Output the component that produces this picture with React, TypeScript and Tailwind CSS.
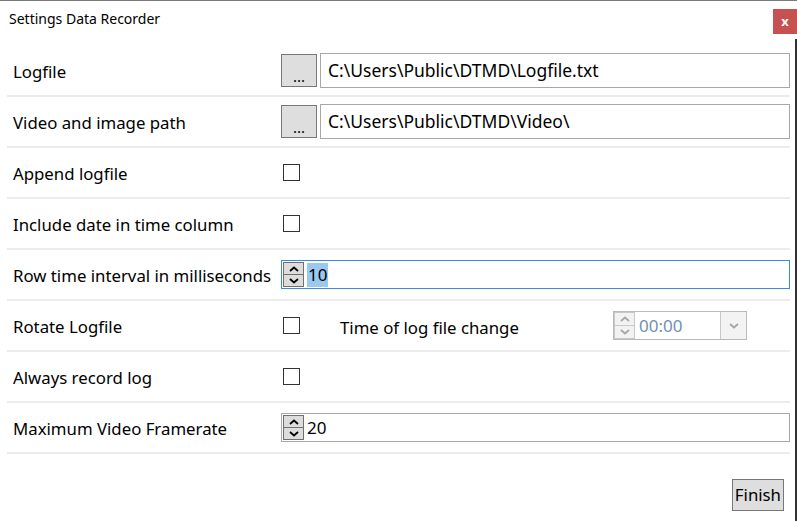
import React from 'react';

const font = { fontFamily: '"Noto Sans", "Open Sans", sans-serif' };

const Check: React.FC = () => (
  <div className="w-[17px] h-[17px] border border-[#333333] bg-white" />
);

const Arrow: React.FC<{ up?: boolean; color?: string }> = ({ up, color = '#000' }) => (
  <svg width="10" height="6" viewBox="0 0 10 6">
    <path
      d={up ? 'M1 5 L5 1.5 L9 5' : 'M1 1 L5 4.5 L9 1'}
      fill="none"
      stroke={color}
      strokeWidth="1.8"
    />
  </svg>
);

const Spin: React.FC<{ disabled?: boolean }> = ({ disabled }) => {
  const c = disabled ? '#a8a8a8' : '#000';
  const bg = disabled ? 'bg-[#f2f2f2]' : 'bg-[#dddddd]';
  const bd = disabled ? 'border-[#c8c8c8]' : 'border-[#707070]';
  return (
    <div className="flex flex-col w-[21px] h-full">
      <div className={`flex-1 flex items-center justify-center border ${bd} ${bg}`}>
        <Arrow up color={c} />
      </div>
      <div className={`flex-1 flex items-center justify-center border border-t-0 ${bd} ${bg}`}>
        <Arrow color={c} />
      </div>
    </div>
  );
};

const Row: React.FC<{ label: string; children?: React.ReactNode }> = ({ label, children }) => (
  <div className="h-[51px] flex items-center border-b-2 border-[#ececec]">
    <div className="w-[274px] pl-[6px] pt-[3px] text-[16.8px] text-black leading-none">{label}</div>
    <div className="flex-1 flex items-center h-full">{children}</div>
  </div>
);

const PathField: React.FC<{ value: string }> = ({ value }) => (
  <div className="flex items-center w-full h-[35px]">
    <button className="w-[36px] h-[33px] bg-[#dedede] border border-[#777777] text-[15px] leading-none pb-[2px] flex items-end justify-center text-black">
      ...
    </button>
    <div className="ml-[3px] flex-1 h-[35px] border border-[#a8a8a8] flex items-center pl-[7px] text-[17.5px] text-black">
      {value}
    </div>
  </div>
);

export default function App() {
  return (
    <div className="w-[797px] h-[521px] bg-white border-t border-[#7a7a7a] overflow-hidden" style={font}>
      <div className="h-[38px] flex items-start justify-between pl-[9px]">
        <div className="mt-[11px] text-[14px] text-black leading-none">Settings Data Recorder</div>
        <button className="mt-[8px] w-[24px] h-[25px] bg-[#c75050] text-white text-[13px] font-bold leading-none flex items-center justify-center">
          x
        </button>
      </div>
      <div className="h-[482px] border-r-2 border-[#333333] pt-[7px]">
        <div className="ml-[7px] w-[783px]">
          <Row label="Logfile">
            <PathField value="C:\Users\Public\DTMD\Logfile.txt" />
          </Row>
          <Row label="Video and image path">
            <PathField value="C:\Users\Public\DTMD\Video\" />
          </Row>
          <Row label="Append logfile">
            <div className="ml-[2px]"><Check /></div>
          </Row>
          <Row label="Include date in time column">
            <div className="ml-[2px]"><Check /></div>
          </Row>
          <Row label="Row time interval in milliseconds">
            <div className="w-full h-[29px] border border-[#3c8ad8] flex items-center pl-[1px]">
              <div className="h-[25px]"><Spin /></div>
              <span className="ml-[3px] bg-[#99c9ef] text-[17px] leading-[24px] px-[1px] text-black">10</span>
            </div>
          </Row>
          <Row label="Rotate Logfile">
            <div className="ml-[2px]"><Check /></div>
            <div className="ml-[40px] w-[273px] text-[16.8px] text-black mt-[4px]">Time of log file change</div>
            <div className="flex h-[29px] w-[134px] border border-[#b9b9b9]">
              <div className="h-full"><Spin disabled /></div>
              <div className="flex-1 flex items-center pl-[4px] text-[17px] text-[#6f8fb5]">00:00</div>
              <div className="w-[26px] h-full bg-[#f3f3f3] border-l border-[#c8c8c8] flex items-center justify-center">
                <Arrow color="#a5a5a5" />
              </div>
            </div>
          </Row>
          <Row label="Always record log">
            <div className="ml-[2px]"><Check /></div>
          </Row>
          <Row label="Maximum Video Framerate">
            <div className="w-full h-[29px] border border-[#a8a8a8] flex items-center pl-[1px]">
              <div className="h-[25px]"><Spin /></div>
              <span className="ml-[3px] text-[17px] leading-[24px] text-black">20</span>
            </div>
          </Row>
          <div className="flex justify-end pr-[6px] pt-[25px]">
            <button className="h-[32px] px-[2px] bg-[#dedede] border border-[#777777] text-[16.8px] text-black leading-none">
              Finish
            </button>
          </div>
        </div>
      </div>
    </div>
  );
}
